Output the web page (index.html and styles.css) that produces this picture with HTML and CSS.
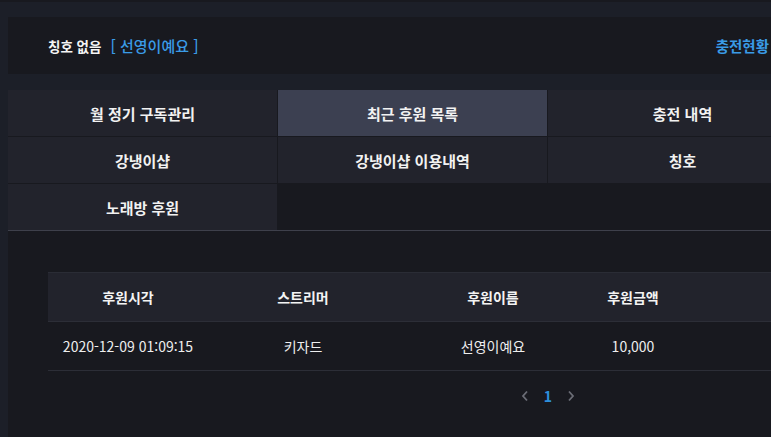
FILE: index.html
```html
<!DOCTYPE html>
<html lang="ko">
<head>
<meta charset="utf-8">
<title>최근 후원 목록</title>
<link rel="stylesheet" href="styles.css">
</head>
<body>
<div class="topline"></div>
<section class="info">
  <span class="info-title">칭호 없음</span>
  <span class="info-name">[ 선영이예요 ]</span>
  <a class="info-charge">충전현황</a>
</section>
<main class="content">
  <nav class="menu">
    <a class="menu-item">월 정기 구독관리</a>
    <a class="menu-item is-active">최근 후원 목록</a>
    <a class="menu-item">충전 내역</a>
    <a class="menu-item">강냉이샵</a>
    <a class="menu-item">강냉이샵 이용내역</a>
    <a class="menu-item">칭호</a>
    <a class="menu-item">노래방 후원</a>
  </nav>
  <div class="list">
    <table class="table">
      <colgroup>
        <col class="c1"><col class="c2"><col class="c3"><col class="c4"><col>
      </colgroup>
      <thead>
        <tr><th>후원시각</th><th>스트리머</th><th>후원이름</th><th>후원금액</th><th></th></tr>
      </thead>
      <tbody>
        <tr><td>2020-12-09 01:09:15</td><td>키자드</td><td>선영이예요</td><td>10,000</td><td></td></tr>
      </tbody>
    </table>
    <div class="pager">
      <span class="pager-arrow"><svg width="8" height="12" viewBox="0 0 8 12"><path d="M6 1.5 L2 6 L6 10.5" fill="none" stroke="currentColor" stroke-width="1.8"/></svg></span>
      <span class="pager-num">1</span>
      <span class="pager-arrow"><svg width="8" height="12" viewBox="0 0 8 12"><path d="M2 1.5 L6 6 L2 10.5" fill="none" stroke="currentColor" stroke-width="1.8"/></svg></span>
    </div>
  </div>
</main>
</body>
</html>
```
FILE: styles.css
```css
html, body {
  margin: 0;
  padding: 0;
}
body {
  background: #1c1f28;
  padding-left: 8px;
  overflow: hidden;
  font-family: "Noto Sans CJK KR", "Noto Sans", sans-serif;
  color: #f2f2f2;
}
.topline {
  height: 2px;
  margin-left: -8px;
  background: #18191f;
  margin-bottom: 15px;
}
.info {
  height: 57px;
  background: #18191f;
  display: flex;
  align-items: center;
  padding: 0 2px 0 40px;
  font-weight: 700;
  margin-bottom: 16px;
}
.info-title {
  color: #f4f4f4;
  font-size: 13.5px;
}
.info-name {
  color: #3a9be6;
  font-size: 15px;
  font-weight: 500;
  margin-left: 9px;
}
.info-charge {
  margin-left: auto;
  color: #3a9be6;
  font-size: 14.5px;
}
.content {
  width: 1080px;
  background: #18191f;
  min-height: 360px;
}
.menu {
  display: grid;
  grid-template-columns: repeat(3, 269px);
  grid-auto-rows: 46px;
  gap: 1px;
  background: #18191f;
  border-bottom: 1px solid #3e404b;
}
.menu-item {
  background: #22232c;
  display: flex;
  align-items: center;
  justify-content: center;
  font-size: 15px;
  font-weight: 700;
  color: #f2f2f2;
}
.menu-item.is-active {
  background: #3c4051;
}
.list {
  padding: 41px 40px 0 40px;
}
.table {
  width: 1000px;
  border-collapse: collapse;
  font-size: 14px;
}
.c1 { width: 160px; }
.c2 { width: 190px; }
.c3 { width: 190px; }
.c4 { width: 90px; }
.table th {
  height: 48px;
  background: #22232c;
  border-top: 1px solid #2a2c35;
  border-bottom: 1px solid #2c2e37;
  font-weight: 700;
  color: #f4f4f4;
  padding: 0;
}
.table td {
  height: 48px;
  border-bottom: 1px solid #2c2e37;
  text-align: center;
  color: #eeeeee;
  padding: 0;
}
.pager {
  display: flex;
  justify-content: center;
  align-items: center;
  gap: 15px;
  height: 50px;
}
.pager-arrow {
  color: #6b6d76;
  display: flex;
}
.pager-num {
  color: #2d8fdc;
  font-size: 14px;
  font-weight: 700;
}
```
